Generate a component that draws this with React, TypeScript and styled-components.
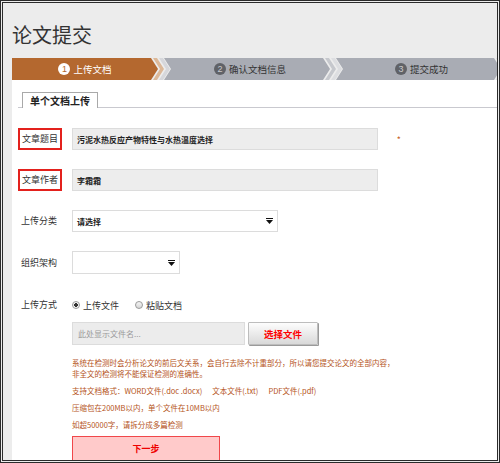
import styled, { createGlobalStyle } from "styled-components";

const GlobalStyle = createGlobalStyle`
  html, body {
    margin: 0;
    padding: 0;
    background: #fff;
  }
  body {
    font-family: "Noto Sans CJK SC", "Noto Sans", sans-serif;
  }
`;

const Frame = styled.div`
  box-sizing: border-box;
  width: 500px;
  height: 463px;
  border: 3px double #2b2b2b;
  background: #ececec;
  padding: 18px 0 0 9px;
  display: flex;
  flex-direction: column;
  overflow: hidden;
`;

const Title = styled.h1`
  margin: 0 0 9px 0;
  font-size: 20px;
  line-height: 28px;
  font-weight: 400;
  color: #333;
`;

// Step bar
const Steps = styled.div`
  display: flex;
  height: 22px;
`;

const Step = styled.div<{ $active?: boolean; $first?: boolean; $width?: number }>`
  display: flex;
  align-items: center;
  justify-content: center;
  gap: 3px;
  height: 22px;
  width: ${({ $width }) => ($width ? `${$width}px` : "auto")};
  flex: ${({ $width }) => ($width ? "none" : "1")};
  margin-left: ${({ $first }) => ($first ? "0" : "-6px")};
  padding-left: ${({ $first }) => ($first ? "0" : "6px")};
  box-sizing: border-box;
  background: ${({ $active }) => ($active ? "#b4682f" : "#a9acb4")};
  color: ${({ $active }) => ($active ? "#fff" : "#333")};
  font-size: 9.5px;
  clip-path: ${({ $first }) =>
    $first
      ? "polygon(0 0, calc(100% - 7px) 0, 100% 50%, calc(100% - 7px) 100%, 0 100%)"
      : "polygon(0 0, calc(100% - 7px) 0, 100% 50%, calc(100% - 7px) 100%, 0 100%, 7px 50%)"};
`;

const Chevron = styled.div<{ $color: string }>`
  flex: none;
  width: 11px;
  height: 22px;
  margin-left: -5px;
  background: ${({ $color }) => $color};
  clip-path: polygon(0 0, 4px 0, 11px 50%, 4px 100%, 0 100%, 7px 50%);
`;

const StepNum = styled.span<{ $active?: boolean }>`
  display: inline-flex;
  align-items: center;
  justify-content: center;
  width: 12px;
  height: 12px;
  border-radius: 50%;
  font-size: 9px;
  line-height: 1;
  font-family: "Liberation Sans", Arial, sans-serif;
  background: ${({ $active }) => ($active ? "#fff" : "#606267")};
  color: ${({ $active }) => ($active ? "#b4682f" : "#c9cacd")};
`;

// Content panel
const Panel = styled.div`
  flex: 1;
  background: #fff;
  padding: 12px 0 0 6px;
`;

const TabBar = styled.div`
  display: flex;
  padding-left: 4px;
  border-bottom: 1px solid #c9c9cf;
`;

const Tab = styled.div`
  border: 1px solid #a9a9a9;
  border-bottom: none;
  background: #fff;
  padding: 0 7px;
  height: 15px;
  line-height: 15px;
  font-size: 10px;
  font-weight: 700;
  color: #222;
  margin-bottom: -1px;
`;

const Form = styled.div`
  margin-top: 20px;
`;

const Row = styled.div<{ $gap?: number; $h?: number }>`
  display: flex;
  align-items: center;
  height: ${({ $h }) => ($h ?? 22)}px;
  margin-bottom: ${({ $gap }) => ($gap ?? 19)}px;
`;

const LabelCell = styled.div`
  width: 54px;
  flex: none;
  display: flex;
`;

const Label = styled.span<{ $boxed?: boolean }>`
  font-size: 9px;
  line-height: 14px;
  color: #333;
  padding: ${({ $boxed }) => ($boxed ? "2px 2px" : "0 3px")};
  border: ${({ $boxed }) => ($boxed ? "2px solid #e3211d" : "none")};
`;

const ReadField = styled.div<{ $w: number; $gray?: boolean }>`
  box-sizing: border-box;
  width: ${({ $w }) => $w}px;
  height: 100%;
  display: flex;
  align-items: center;
  padding-left: 4px;
  background: ${({ $gray }) => ($gray ? "#ededed" : "#fff")};
  border: 1px solid #dcdcdc;
  font-size: 8px;
  font-weight: 700;
  color: #222;
  position: relative;
`;

const Required = styled.span`
  margin-left: 19px;
  color: #c8642a;
  font-size: 7px;
  font-weight: 700;
  line-height: 1;
`;

const Caret = styled.svg`
  position: absolute;
  right: 4px;
  top: 50%;
  transform: translateY(-50%);
`;

const RadioGroup = styled.label<{ $offset?: number }>`
  display: flex;
  align-items: center;
  gap: 3px;
  margin-left: ${({ $offset }) => $offset ?? 0}px;
  font-size: 9px;
  color: #333;
`;

const RadioDot = styled.span<{ $checked?: boolean }>`
  box-sizing: border-box;
  width: 8px;
  height: 8px;
  border-radius: 50%;
  border: 1px solid #9a9a9a;
  background: ${({ $checked }) =>
    $checked
      ? "radial-gradient(circle, #333 0 1.6px, #f3f3f3 2px)"
      : "linear-gradient(#f5f5f5, #d6d6d6)"};
`;

const FileField = styled.div`
  box-sizing: border-box;
  width: 173px;
  height: 23px;
  display: flex;
  align-items: center;
  padding-left: 5px;
  background: #ececec;
  border: 1px solid #dcdcdc;
  font-size: 8px;
  color: #9a9a9a;
`;

const PickButton = styled.button`
  box-sizing: border-box;
  width: 70px;
  height: 23px;
  margin-left: 3px;
  border: 1px solid #bdbdbd;
  border-radius: 1px;
  background: linear-gradient(#fdfdfd, #d9d9d9);
  box-shadow: 1px 1px 0 #9a9a9a;
  color: #f00;
  font-family: inherit;
  font-size: 9.5px;
  font-weight: 700;
  padding: 0;
`;

const Notes = styled.div`
  margin: 12px 0 0 54px;
  color: #b5541b;
  font-size: 7.5px;
  line-height: 11px;

  p {
    margin: 0 0 6px 0;
  }
`;

const Gap = styled.span`
  display: inline-block;
  width: 10px;
`;

const NextButton = styled.button`
  box-sizing: border-box;
  display: block;
  width: 148px;
  height: 25px;
  margin: 6px 0 0 54px;
  border: 1px solid #f0474a;
  background: #ffcaca;
  color: #e00;
  font-family: inherit;
  font-size: 9px;
  font-weight: 700;
  padding: 0;
`;

const DropCaret = () => (
  <Caret width="7" height="6" viewBox="0 0 7 6">
    <rect x="0" y="0" width="7" height="1" fill="#111" />
    <path d="M0 2 H7 L3.5 6 Z" fill="#111" />
  </Caret>
);

const App = () => {
  return (
    <>
      <GlobalStyle />
      <Frame>
        <Title>论文提交</Title>
        <Steps>
          <Step $active $first $width={146}>
            <StepNum $active>1</StepNum>上传文档
          </Step>
          <Chevron $color="#dcb898" />
          <Chevron $color="#d6d7db" />
          <Step $width={166}>
            <StepNum>2</StepNum>确认文档信息
          </Step>
          <Chevron $color="#c6c8cd" />
          <Chevron $color="#dddee1" />
          <Step $width={165}>
            <StepNum>3</StepNum>提交成功
          </Step>
          <Chevron $color="#d6d7db" />
        </Steps>
        <Panel>
          <TabBar>
            <Tab>单个文档上传</Tab>
          </TabBar>
          <Form>
            <Row>
              <LabelCell>
                <Label $boxed>文章题目</Label>
              </LabelCell>
              <ReadField $w={306} $gray>
                污泥水热反应产物特性与水热温度选择
              </ReadField>
              <Required>*</Required>
            </Row>
            <Row>
              <LabelCell>
                <Label $boxed>文章作者</Label>
              </LabelCell>
              <ReadField $w={306} $gray>
                李霜霜
              </ReadField>
            </Row>
            <Row>
              <LabelCell>
                <Label>上传分类</Label>
              </LabelCell>
              <ReadField $w={206}>
                请选择
                <DropCaret />
              </ReadField>
            </Row>
            <Row $h={23} $gap={20}>
              <LabelCell>
                <Label>组织架构</Label>
              </LabelCell>
              <ReadField $w={108}>
                <DropCaret />
              </ReadField>
            </Row>
            <Row $gap={6}>
              <LabelCell>
                <Label>上传方式</Label>
              </LabelCell>
              <RadioGroup>
                <RadioDot $checked />
                上传文件
              </RadioGroup>
              <RadioGroup $offset={16}>
                <RadioDot />
                粘贴文档
              </RadioGroup>
            </Row>
            <Row $h={23} $gap={0}>
              <LabelCell />
              <FileField>此处显示文件名...</FileField>
              <PickButton>选择文件</PickButton>
            </Row>
          </Form>
          <Notes>
            <p>
              系统在检测时会分析论文的前后文关系，会自行去除不计重部分，所以请您提交论文的全部内容，
              <br />
              非全文的检测将不能保证检测的准确性。
            </p>
            <p>
              支持文档格式：WORD文件(.doc .docx)
              <Gap />
              文本文件(.txt)
              <Gap />
              PDF文件(.pdf)
            </p>
            <p>压缩包在200MB以内，单个文件在10MB以内</p>
            <p>如超50000字，请拆分成多篇检测</p>
          </Notes>
          <NextButton>下一步</NextButton>
        </Panel>
      </Frame>
    </>
  );
};

export default App;
